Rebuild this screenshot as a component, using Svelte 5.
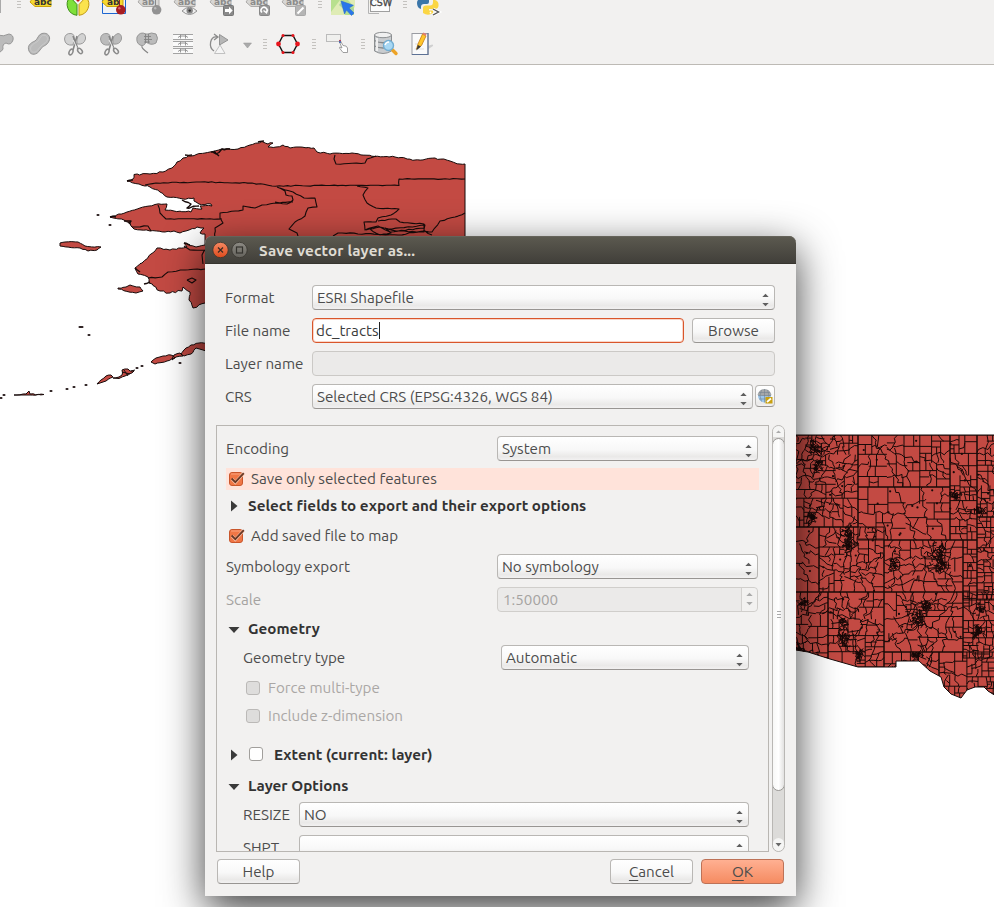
<script>
  let seed = 4326;
  function rnd() {
    seed = (seed * 1664525 + 1013904223) % 4294967296;
    return seed / 4294967296;
  }

  const fmt = (pts) => pts.map((p) => p[0].toFixed(1) + ' ' + p[1].toFixed(1)).join('L');

  // Midpoint displacement gives coastlines and borders their ragged look.
  function rough(pts, amp, minLen = 4) {
    const out = [pts[0]];
    for (let i = 1; i < pts.length; i++) {
      const a = pts[i - 1];
      const b = pts[i];
      const n = Math.max(1, Math.round(Math.hypot(b[0] - a[0], b[1] - a[1]) / minLen));
      for (let k = 1; k < n; k++) {
        const t = k / n;
        out.push([
          a[0] + (b[0] - a[0]) * t + (rnd() - 0.5) * amp,
          a[1] + (b[1] - a[1]) * t + (rnd() - 0.5) * amp
        ]);
      }
      out.push(b);
    }
    return out;
  }

  const mainland = 'M' + fmt([
    ...rough([[127,181],[133,179],[134,174.5],[150,174],[163,172],[172,168],[177,162],[183,158],[191,156],[205,153],[215,151],[225,149],[238,149],[250,145],[262,141.5],[268,144],[273,143],[268,147],[276,147],[283,145],[290,148],[300,147],[314,148],[317,152],[330,154],[352,153],[375,156.5],[395,157],[415,160],[435,158],[450,161],[460,164],[465,164]], 1.6, 3),
    [465,250],[205,250],
    ...rough([[205,234],[200,233],[204,228],[197,227],[189,230],[180,233],[174,231],[165,232],[150,231],[134,229],[131,226],[130,223],[124,220],[110,217],[127,212],[140,208],[155,204.5],[167,204],[165,210],[174,211],[191,212],[193,208],[202,209],[200,206],[212,206],[211,204],[199,204],[194,201],[194,198],[183,199],[167,197],[160,192],[150,187],[139,184],[127,181]], 1.4, 3)
  ]) + 'Z';

  const southwest = 'M' + fmt(
    rough([[220,245],[205,245],[196,247],[184,243],[187,247],[170,250],[157,248],[151,254],[142,263],[135,268],[138,274],[148,277],[149,283],[160,291],[170,293],[182,291],[183,287],[190,292],[189,300],[193,308],[205,303],[220,304]], 2, 3)
  ) + 'Z';

  const alaskaBorders = [
    [[145,185],[156,183],[200,182],[252,183],[272,186],[330,185.5],[399,185.5],[399,179],[465,179]],
    [[335,155],[334,159],[336,164],[365,163],[367,159],[376,156]],
    [[277,187],[285,191],[286,195],[292,196],[293,200],[287,204],[275,202]],
    [[280,188],[293,192],[304,198],[315,198],[317,207],[308,208],[305,216],[295,222],[289,229],[297,233],[298,236]],
    [[293,202],[275,203],[262,205],[255,208],[243,206],[243,210],[220,213],[220,218],[223,223],[215,228],[215,238]],
    [[158,205],[160,213],[166,219],[222,219]],
    [[132,227],[148,226],[151,231]],
    [[357,186],[368,188],[363,195],[367,203],[376,208],[399,209],[391,215],[378,218],[376,222],[364,222],[365,230],[378,226],[390,232],[424,228],[424,224],[400,222],[396,219],[378,221]],
    [[366,230],[380,227],[392,229],[425,225],[424,232],[396,231],[385,228],[391,233],[380,235],[370,229]],
    [[424,231],[432,232],[440,221],[455,217],[465,213]],
    [[333,236],[338,233],[398,235],[425,231],[432,235]],
    [[184,246],[190,250],[205,250]],
    [[148,278],[162,277],[168,272],[185,270],[205,269]],
    [[187,280],[192,278],[196,280],[192,283],[187,280]],
    [[206,249],[202,255],[203,264]]
  ].map((p) => 'M' + fmt(rough(p, 1, 4))).join('');

  const tips = [
    [[185,155],[192,155]], [[211,152],[216,154],[222,149],[230,149]], [[214,151],[219,156]],
    [[182,200],[191,204],[187,208],[199,206]], [[124,221],[131,221],[129,224]], [[127,181],[133,180]],
    [[184,243],[190,245]], [[110,217],[116,217]], [[258,142],[264,141]], [[135,268],[140,272]], [[144,284],[150,282]]
  ].map((p) => 'M' + fmt(rough(p, 2, 3))).join('');

  const islands = [
    [[60,243],[65,242],[78,242],[85,246],[101,247],[97,250],[88,251],[80,248],[60,246]],
    [[118,288],[126,287],[130,285],[140,287],[143,291],[136,293],[118,289]],
    [[97,384],[101,380],[106,376],[111,375],[113,377],[106,381]],
    [[113,378],[119,377],[122,375],[122,370],[128,369],[130,371],[134,371],[129,374],[125,376],[119,378.5]],
    [[151,362],[156,358],[163,356],[171,355],[175,358],[167,361],[155,364]],
    [[172,360],[174,355],[180,353],[183,356],[176,357]],
    [[181,354],[184,350],[191,345],[199,343],[210,343],[210,352],[203,350],[196,348],[191,354],[184,356]],
    [[14,395],[26,394],[29,391],[30,394],[44,394.5],[30,395]]
  ].map((p) => 'M' + fmt(rough(p, 1.2, 3)) + 'Z').join('');

  const specks = [[98,215],[110,225],[80,327],[89,335],[1,398],[4,395],[51,391],[67,389],[74,387],[86,385],[137,368],[142,366],[180,363],[82,327]];

  // Census tracts: cells are split recursively, finer near towns.
  const towns = [[817,449,6],[818,465,4],[847,532,6],[848,545,6],[938,553,8],[940,566,6],[845,638,8],[917,618,6],[926,606,5],[978,632,7],[860,655,5],[917,656,5],[804,603,4],[798,648,4],[893,565,4],[955,496,4],[979,510,4],[812,519,4],[843,622,4],[980,610,3]];

  let tracts = '';
  function line(a, b, wob) {
    tracts += 'M' + fmt(wob < 0.6 ? [a, b] : rough([a, b], wob, 3.6));
  }
  function cellSize(x, y) {
    let s = 10;
    if (x < 819 && y > 527 && y < 592) s = 20;
    else if (x < 858 && y < 527) s = 8.5;
    else if (x > 858 && x < 950 && y > 487 && y < 540) s = 14;
    else if (x > 950 && y < 487) s = 9.5;
    else if (x > 963) s = 7;
    for (const t of towns) {
      const d = Math.hypot(x - t[0], y - t[1]);
      if (d < t[2] * 2) s = Math.min(s, 3 + d / 3);
    }
    return s;
  }
  function split(x, y, w, h) {
    const cx = x + w / 2;
    const cy = y + h / 2;
    const s = cellSize(cx, cy) * (0.7 + rnd() * 0.7);
    const big = Math.max(w, h);
    if (big < s * 1.25 || Math.min(w, h) < 1.8) return;
    const east = cx > 950 || (cx > 858 && cy < 540);
    const wob = rnd() < (east ? 0.4 : 0.75) ? Math.min(4.5, big * 0.28) : 0;
    const f = 0.3 + rnd() * 0.4;
    if (w * (0.75 + rnd() * 0.5) > h) {
      const m = x + w * f;
      const k = wob ? (rnd() - 0.5) * w * 0.4 : 0;
      line([m - k, y], [m + k, y + h], wob);
      split(x, y, w * f, h);
      split(m, y, w * (1 - f), h);
    } else {
      const m = y + h * f;
      const k = wob ? (rnd() - 0.5) * h * 0.4 : 0;
      line([x, m - k], [x + w, m + k], wob);
      split(x, y, w, h * f);
      split(x, m, w, h * (1 - f));
    }
  }
  const counties = [
    [790,435,68,92],[858,435,92,52],[950,435,27,105],[977,435,20,82],[858,487,92,53],
    [790,527,29,65],[819,527,65,65],[884,540,79,52],[963,540,14,60],[977,517,20,83],
    [790,592,38,75],[828,592,56,75],[884,592,79,60],[884,652,55,26],[963,592,34,66],[939,652,58,50]
  ];
  for (const [x, y, w, h] of counties) {
    tracts += `M${x} ${y}h${w}v${h}h${-w}z`;
    split(x, y, w, h);
  }

  let sprawl = '';
  for (const [tx, ty, r] of towns) {
    for (let i = 0; i < r * 2.8; i++) {
      let x = tx + (rnd() + rnd() - 1) * r * 0.9;
      let y = ty + (rnd() + rnd() - 1) * r * 1.1;
      const p = [[x, y]];
      for (let j = 0; j < 5; j++) {
        x += (rnd() - 0.5) * 4.4;
        y += (rnd() - 0.5) * 4.4;
        p.push([x, y]);
      }
      sprawl += 'M' + fmt(p);
    }
  }
  const hamlets = Array.from({ length: 60 }, () => [798 + rnd() * 194, 438 + rnd() * 220]);

  const conus = 'M790 435H996V696L988 691L984 687L975 687L967 690L961 698L951 694L944 687L941 677L930 671L919 661H896V667H858L830 659L808 652L790 649Z';

  let fileName = $state('dc_tracts');
</script>

{#snippet arrows()}
  <svg class="arrows" width="7" height="14" viewBox="0 0 7 14"><path d="M.3 4L3.5.7L6.7 4zM.3 10L3.5 13.3L6.7 10z" /></svg>
{/snippet}

{#snippet grip(cls)}
  <svg class={cls} viewBox="0 0 6 12" width="6" height="12"><path d="M1 1.5h4M1 4.5h4M1 7.5h4M1 10.5h4" stroke="#c4c2bf" /></svg>
{/snippet}

{#snippet tag(x, bright)}
  <path d="M{x - 11} 2L{x - 6} -5H{x + 10}V6.5H{x - 6}Z" fill={bright ? '#f5d92f' : '#d8d7d5'} stroke={bright ? '#c9a20c' : '#adaba9'} />
{/snippet}

{#snippet check()}
  <svg class="tick" width="17" height="17" viewBox="0 0 17 17">
    <rect x="1.5" y="1.5" width="13" height="13" rx="2.5" fill="#f07746" stroke="#c9562b" />
    <path d="M3 3h10" stroke="#f9a37e" />
    <path d="M4 8L7.3 11.5L15.5 2.5" fill="none" stroke="#fbc1a8" stroke-width="3.2" />
    <path d="M3.6 7.5L7.3 11.2L15.8 2.1" fill="none" stroke="#693824" stroke-width="1.8" />
  </svg>
{/snippet}

<main>
  <header class="toolbars">
    <div class="bar top">
      <svg width="60" height="20" viewBox="0 0 60 20">
        <path d="M.5 0V13" stroke="#aaa" /><path d="M17 1.5h4M17 4.5h4M17 7.5h4M17-1.5h4" stroke="#c4c2bf" />
        {@render tag(41, true)}<text x="34" y="4.5" fill="#333">abc</text>
      </svg>
      <svg width="36" height="20" viewBox="60 0 36 20">
        <path d="M77 4.5L70-3A11 11 0 0 0 77 15.3Z" fill="#7fe03a" stroke="#3d8f16" /><path d="M79 4.5L86-3A11 11 0 0 1 79 15.3Z" fill="#fbe34d" stroke="#c19a12" />
        <path d="M75 -1L78 2L81 -1Z" fill="#c4141b" />
      </svg>
      <svg width="36" height="20" viewBox="96 0 36 20">
        <path d="M102.5-5V13.5H125.5V-5" fill="#f0f2f5" stroke="#1d66d1" />
        {@render tag(113, true)}<text x="107" y="4.5" fill="#333">ab</text>
        <path d="M119.5-2V6" stroke="#8b2326" /><circle cx="120.8" cy="9.8" r="4.8" fill="#a81d21" /><circle cx="119.3" cy="8.2" r="1.2" fill="#da6468" />
      </svg>
      <svg width="36" height="20" viewBox="132 0 36 20">
        {@render tag(149, false)}<text x="142" y="4.5" fill="#8b8b8b">ab</text>
        <path d="M155.5-2V6" stroke="#8a8a8a" /><circle cx="156.6" cy="9.8" r="4.8" fill="#929292" /><circle cx="155.2" cy="8.2" r="1.2" fill="#bbb" />
      </svg>
      <svg width="36" height="20" viewBox="168 0 36 20">
        {@render tag(185, false)}<text x="178" y="4.5" fill="#8b8b8b">abc</text>
        <path d="M182 11Q189.5 3.5 197 11Q189.5 18 182 11Z" fill="#eee" stroke="#929292" /><circle cx="189.7" cy="10.6" r="3.2" fill="#888" /><circle cx="189.7" cy="10.6" r="1.2" fill="#333" />
      </svg>
      <svg width="36" height="20" viewBox="204 0 36 20">
        {@render tag(221, false)}<text x="214" y="4.5" fill="#8b8b8b">abc</text>
        <rect x="223.5" y="5.5" width="10" height="10" rx="1" fill="#8a8a8a" stroke="#777" /><path d="M225 9H229V6.8L232.7 10.5L229 14.2V12H225Z" fill="#fff" />
      </svg>
      <svg width="36" height="20" viewBox="240 0 36 20">
        {@render tag(257, false)}<text x="250" y="4.5" fill="#8b8b8b">abc</text>
        <rect x="259.5" y="5.5" width="10" height="10" rx="1" fill="#999" stroke="#888" /><path d="M262 12.5A3 3 0 1 1 266.5 12M263.5 10.5L266.5 12.8L267.8 9.5" fill="none" stroke="#fff" stroke-width="1.5" />
      </svg>
      <svg width="36" height="20" viewBox="276 0 36 20">
        {@render tag(293, false)}<text x="286" y="4.5" fill="#8b8b8b">abc</text>
        <rect x="295.5" y="5.5" width="10" height="10" rx="1" fill="#b5b5b5" stroke="#a8a8a8" /><path d="M297.5 13.5L303.5 7.5" stroke="#fff" stroke-width="2" />
      </svg>
      <svg width="48" height="20" viewBox="312 0 48 20">
        <path d="M318 1.5h4M318 4.5h4M318 7.5h4M318-1.5h4" stroke="#c4c2bf" />
        <path d="M331-2H354V15H331Z" fill="#b8e08e" /><path d="M331 12L340 0L345 15H331ZM348 0L355 8V0Z" fill="#dfecb5" /><path d="M343 0L347 5L354 9V15H350L339 5Z" fill="#a9d4a0" />
        <path d="M341 1L353.5 5.3L349 8L354 13L351.5 15.5L346.5 10L344.5 14Z" fill="#2a76ea" stroke="#2466cc" stroke-width=".5" />
      </svg>
      <svg width="50" height="20" viewBox="360 0 50 20">
        <path d="M368.5 0V13.5H379" fill="none" stroke="#b4b4b4" /><rect x="370.5" y="-4" width="19" height="15.5" fill="#fcfcfc" stroke="#9f9f9f" />
        <text x="370" y="6" fill="#444" class="csw">CSW</text>
        <path d="M403 1.5h4M403 4.5h4M403 7.5h4M403-1.5h4" stroke="#c4c2bf" />
      </svg>
      <svg width="36" height="20" viewBox="410 0 36 20">
        <path d="M429-5V2Q429 4 427 4H424Q421 4 421 7V9Q417 8 417 3Q417-1 421-1H429" fill="#3b76a9" />
        <path d="M433 0H435Q439 1 438.5 6Q438 9 435 9H429V10.5H433V13Q428 16.5 423 13V8Q423 5.5 426 5.5H430Q433 5.5 433 2Z" fill="#fbd644" /><circle cx="430.5" cy="12.5" r=".9" fill="#fff" />
        <path d="M433 9L439 12L433 15" fill="none" stroke="#fff" stroke-width="3" /><path d="M433 9L438.5 12L433 15" fill="none" stroke="#555" stroke-width="1.4" />
      </svg>
    </div>
    <div class="bar">
      <svg width="21" height="32" viewBox="0 28 21 32"><path d="M-3 35Q4 37 9 34Q14 35 13 40Q11 46 6 43Q2 44 3 49Q0 54-3 51Z" fill="#bbb" stroke="#979797" /></svg>
      <svg width="36" height="32" viewBox="21 28 36 32"><path d="M42 33.5C48 32 51 37 49 41C47 46 43 45 40 50C37 55 31 56 29 51C27 46 30 43 35 41C38 39 38 34.5 42 33.5Z" fill="#bbb" stroke="#959595" /><path d="M42.5 35.5C46.5 34.5 48.5 37.5 47 40.5C45 44 42 44 38.5 49C36 53 32.5 53 31 50.5C29.5 47 32 44.5 36 42.5C40 40.5 39.5 36.5 42.5 35.5Z" fill="none" stroke="#cfcfcf" stroke-width=".7" /></svg>
      {#each [75, 111] as x}
        <svg width="36" height="32" viewBox="{x - 18} 28 36 32">
          <path d="M{x - 2} 45Q{x - 10} 46 {x - 10.5} 39Q{x - 10} 33 {x - 4} 33.5Q{x} 34 {x - 1} 40Z" fill={x === 75 ? '#d2d2d2' : '#bbb'} stroke="#9b9b9b" /><path d="M{x + 2} 44Q{x + 1} 35 {x + 7} 33.5Q{x + 11} 34 {x + 10.5} 39Q{x + 9} 45 {x + 2} 44Z" fill={x === 75 ? '#d2d2d2' : '#bbb'} stroke="#9b9b9b" />
          <path d="M{x - 2} 36L{x + 3} 49M{x + 2} 36L{x - 2} 50" stroke="#858585" stroke-width="1.6" /><path d="M{x - 2} 40L{x + 2} 48" stroke="#ededed" />
          <ellipse cx={x - 4} cy="52" rx="1.8" ry="3" transform="rotate(25 {x - 4} 52)" fill="none" stroke="#8b8b8b" stroke-width="1.5" /><ellipse cx={x + 5} cy="51" rx="1.8" ry="3" transform="rotate(-40 {x + 5} 51)" fill="none" stroke="#8b8b8b" stroke-width="1.5" />
        </svg>
      {/each}
      <svg width="36" height="32" viewBox="129 28 36 32"><path d="M146 34Q140 31 137 37Q136 43 140 45Q144 47 146 42Q151 46 156 43Q159 38 156 34Q151 32 148 34Z" fill="#bbb" stroke="#979797" /><path d="M144 36.5H151M144 39.5H152M144 42H150M145.5 34V43M148.5 34V43" stroke="#828282" stroke-width=".9" /><path d="M142 46Q141 48 148 53" fill="none" stroke="#858585" stroke-width="1.2" /></svg>
      <svg width="36" height="32" viewBox="165 28 36 32">
        {#each [34.5, 41.5, 48.5] as y}<rect x="173" {y} width="20" height="4.5" fill="#fafafa" /><path d="M173 {y}H193M173 {y + 5}H193" stroke="#a3a3a3" /><path d="M178 {y + 3}Q180 {y + 1} 182 {y + 1.5}H184Q186 {y + 1} 188 {y + 3}M180.5 {y}V{y + 4}M185.5 {y}V{y + 4}" fill="none" stroke="#8c8c8c" stroke-width=".9" />{/each}
      </svg>
      <svg width="36" height="32" viewBox="201 28 36 32"><path d="M219.5 34.5V45L228 40Z" fill="#b7b7b7" stroke="#949494" /><path d="M220 45L225 53.5H214.5Z" fill="#f5f5f5" stroke="#c1c1c1" /><path d="M214 51C208 47 210 36 217 37M214 34L218 37L214 40" fill="none" stroke="#8b8b8b" stroke-width="1.3" /></svg>
      <svg width="21" height="32" viewBox="237 28 21 32"><path d="M243.5 43H251.5L247.5 48Z" fill="#aaa" stroke="#969696" stroke-width=".5" /></svg>
      {@render grip('gap-a')}
      <svg width="36" height="32" viewBox="270 28 36 32"><path d="M278.5 44L283 35.5H293L297.5 44L293 52.5H283Z" fill="none" stroke="#111" stroke-width="1.4" /><g fill="#e8141c"><circle cx="278.5" cy="44" r="2.4" /><circle cx="297.5" cy="44" r="2.4" /><circle cx="283" cy="35.5" r="1.5" /><circle cx="293" cy="35.5" r="1.5" /><circle cx="283" cy="52.5" r="1.5" /><circle cx="293" cy="52.5" r="1.5" /></g></svg>
      {@render grip('gap-b')}
      <svg width="32" height="32" viewBox="322 28 32 32"><rect x="326.5" y="34.5" width="14" height="7" fill="#f0f0ee" stroke="#bbb" /><path d="M339.5 42L342 48Q339 46 339.5 48L343 52.5H347.5V48Q347 45.5 343 45.5L340.5 41Z" fill="#fff" stroke="#888" stroke-width=".8" /><path d="M340 40V43" stroke="#3d65b5" stroke-width="1.6" /><circle cx="340" cy="40.5" r=".8" fill="#d33" /></svg>
      {@render grip('gap-c')}
      <svg width="35" height="32" viewBox="369 28 35 32">
        <path d="M374.5 35V51Q383 56 391.5 51V35Z" fill="#c9cccf" stroke="#8c8f91" /><ellipse cx="383" cy="35" rx="8.5" ry="2.7" fill="#f0f0f0" stroke="#8c8f91" /><path d="M374.5 40.5Q383 45 391.5 40.5M374.5 46Q383 50 391.5 46" fill="none" stroke="#85888a" stroke-width="1.3" /><path d="M377 38V51" stroke="#eee" stroke-width="2" />
        <path d="M392.5 50L396 53.5" stroke="#eda326" stroke-width="3.4" stroke-linecap="round" /><circle cx="388.5" cy="45.5" r="5" fill="#a8d8f4" stroke="#74aed2" stroke-width="1.4" /><path d="M385 45Q386 42 389 42" fill="none" stroke="#fff" stroke-width="1.5" />
      </svg>
      <svg width="36" height="32" viewBox="404 28 36 32"><path d="M421 54L433 46Q434 43 428 46Z" fill="#d0d0d0" /><rect x="412" y="33.5" width="16" height="21" fill="#fafafa" stroke="#9a9ca2" /><path d="M412 54.5H428V33" fill="none" stroke="#5d7195" stroke-width="1.1" /><path d="M415 44H423M414.5 49H424" stroke="#ddd" /><path d="M416.5 49L418 44L422.5 34L426 36L421.5 45.5Z" fill="#ffc52b" stroke="#c77e12" stroke-width=".8" /><path d="M416.3 50.5L417.8 45L421 46.5Z" fill="#393939" /><path d="M422.5 34L423.3 32.5L426.5 34L426 36Z" fill="#e27d71" /></svg>
    </div>
  </header>

  <svg class="map" width="994" height="842" viewBox="0 65 994 842">
    <defs><clipPath id="landmass"><path d={conus} /></clipPath></defs>
    <g fill="#c34a43" stroke="#170b0a" stroke-width="1" stroke-linejoin="round">
      <path d={mainland} /><path d={southwest} /><path d={islands} />
      <path d={alaskaBorders} fill="none" stroke-width="1.1" />
      <path d={tips} fill="none" stroke-width="1.4" />
      <path d="M122 372L130 374M124 370L128 376M131 371L135 370" fill="none" />
      <path d={conus} />
    </g>
    {#each specks as [x, y]}<ellipse cx={x} cy={y} rx="1.6" ry="1" fill="#221415" />{/each}
    <g clip-path="url(#landmass)" fill="none" stroke="#180a09">
      <path d={tracts} stroke-width="1" />
      <path d={sprawl} stroke-width="1" />
      {#each hamlets as [x, y]}<circle cx={x} cy={y} r="1.1" fill="#180a09" stroke="none" />{/each}
    </g>
  </svg>

  <section class="dialog">
    <div class="titlebar">
      <svg width="36" height="18" viewBox="0 0 36 18">
        <defs><linearGradient id="close" x2="0" y2="1"><stop stop-color="#f58a63" /><stop offset="1" stop-color="#df4a1c" /></linearGradient><linearGradient id="max" x2="0" y2="1"><stop stop-color="#8d8b84" /><stop offset="1" stop-color="#64625c" /></linearGradient></defs>
        <circle cx="8.5" cy="9" r="7.7" fill="url(#close)" stroke="#37352f" stroke-width=".8" /><path d="M6 6.5L11 11.5M11 6.5L6 11.5" stroke="#3b2a22" stroke-width="1.2" />
        <circle cx="27.5" cy="9" r="7.7" fill="url(#max)" stroke="#37352f" stroke-width=".8" /><rect x="24.5" y="6" width="6" height="6" fill="none" stroke="#34332e" stroke-width="1.2" />
      </svg>
      <h1>Save vector layer as...</h1>
    </div>

    <div class="form">
      <div class="row"><label for="fmt">Format</label><div class="combo" id="fmt"><span>ESRI Shapefile</span>{@render arrows()}</div></div>
      <div class="row"><label for="file">File name</label><div class="input focus" id="file"><span>{fileName}</span><i></i></div><button class="browse">Browse</button></div>
      <div class="row"><label for="layer">Layer name</label><div class="input off" id="layer"></div></div>
      <div class="row"><label for="crs">CRS</label><div class="combo" id="crs"><span>Selected CRS (EPSG:4326, WGS 84)</span>{@render arrows()}</div>
        <button class="globe" aria-label="Select CRS">
          <svg width="16" height="16" viewBox="0 0 16 16"><circle cx="7.5" cy="8" r="6.5" fill="#9cc6ec" /><path d="M.5 7Q2 1 7.5 1T14.5 7Q13 9 7.5 8T.5 7Z" fill="#a5a7a9" /><path d="M1 7.5H14M2 4.5H13M2 11H11M7.5 1V14.5M4.5 2Q1.5 8 4.5 13.5M10.5 2Q13.5 8 10.5 13" fill="none" stroke="#76838e" stroke-width=".6" /><rect x="8.5" y="9" width="7" height="6.5" fill="#c9a00f" /><path d="M10 14L14 10.5" stroke="#fff" stroke-width="1.7" /></svg>
        </button>
      </div>
    </div>

    <div class="options">
      <div class="pane">
        <div class="line"><span class="name">Encoding</span><div class="combo right"><span>System</span>{@render arrows()}</div></div>
        <div class="checkline hot">{@render check()}<span>Save only selected features</span></div>
        <div class="group"><svg width="22" height="12" viewBox="0 0 22 12"><path d="M5 .5L11.5 6L5 11.5Z" /></svg><b>Select fields to export and their export options</b></div>
        <div class="checkline">{@render check()}<span>Add saved file to map</span></div>
        <div class="line sym"><span class="name">Symbology export</span><div class="combo right"><span>No symbology</span>{@render arrows()}</div></div>
        <div class="line scale"><span class="name">Scale</span><div class="spin right"><span>1:50000</span><div>{@render arrows()}</div></div></div>
        <div class="group geo"><svg width="22" height="12" viewBox="0 0 22 12"><path d="M2.5 4H13.5L8 10Z" /></svg><b>Geometry</b></div>
        <div class="line inner"><span class="name">Geometry type</span><div class="combo type"><span>Automatic</span>{@render arrows()}</div></div>
        <div class="boxline"><i class="box"></i><span>Force multi-type</span></div>
        <div class="boxline"><i class="box"></i><span>Include z-dimension</span></div>
        <div class="group extent"><svg width="22" height="12" viewBox="0 0 22 12"><path d="M5 .5L11.5 6L5 11.5Z" /></svg><i class="box on"></i><b>Extent (current: layer)</b></div>
        <div class="group lay"><svg width="22" height="12" viewBox="0 0 22 12"><path d="M2.5 4H13.5L8 10Z" /></svg><b>Layer Options</b></div>
        <div class="line inner"><span class="name opt">RESIZE</span><div class="combo"><span>NO</span>{@render arrows()}</div></div>
        <div class="line inner shpt"><span class="name opt">SHPT</span><div class="combo"><span></span>{@render arrows()}</div></div>
      </div>
      <div class="scroll">
        <svg class="up" width="11" height="11" viewBox="0 0 11 11"><path d="M3 7L5.5 4.5L8 7Z" fill="#aaa" /></svg>
        <div class="thumb"><i></i><i></i><i></i></div>
        <svg class="down" width="11" height="13" viewBox="0 0 11 13"><path d="M2.5 5L5.5 8.5L8.5 5Z" fill="#696969" /></svg>
      </div>
    </div>

    <footer><button>Help</button><span></span><button><u>C</u>ancel</button><button class="ok"><u>O</u>K</button></footer>
  </section>
</main>

<style>
  :global(body) { margin: 0; overflow: hidden; background: #fff; }
  main { position: relative; width: 994px; height: 907px; overflow: hidden; font: 15.2px Ubuntu, 'Noto Sans', sans-serif; color: #4c4c4c; }
  svg { display: block; flex: none; }
  .toolbars { box-sizing: border-box; height: 65px; background: #f2f1f0; border-bottom: 1px solid #bdbab5; }
  .bar { display: flex; align-items: center; height: 32px; }
  .bar.top { height: 28px; align-items: flex-start; }
  .bar text { font: bold 9px 'DejaVu Sans', sans-serif; }
  .bar .csw { font-size: 9.5px; font-weight: normal; letter-spacing: .1px; stroke: #444; stroke-width: .3px; }
  .gap-a { margin: 0 2px 0 4px; }
  .gap-b { margin: 0 5px; }
  .gap-c { margin: 0 3px 0 6px; }
  .map { background: #fff; }

  .dialog { position: absolute; left: 205px; top: 236px; width: 591px; height: 660px; box-sizing: border-box; background: #f2f1f0; border-radius: 7px 7px 0 0; box-shadow: 0 13px 42px rgba(0, 0, 0, .76); }
  .titlebar { display: flex; align-items: center; height: 28px; padding-left: 7px; border-radius: 7px 7px 0 0; background: linear-gradient(#5c5a50, #403e39); box-shadow: inset 0 1px #65635a, inset 0 -1px #37352f; }
  h1 { margin: 1px 0 0 11px; font-size: 15.2px; font-weight: bold; color: #dfdbd2; letter-spacing: .15px; }

  .form { display: flex; flex-direction: column; gap: 8px; padding: 21px 21px 0 20px; }
  .row { display: flex; align-items: center; height: 25px; }
  .row label { width: 87px; flex: none; white-space: nowrap; }
  .combo, .input, .spin, button { box-sizing: border-box; height: 25px; border: 1px solid #b9b7b4; border-bottom-color: #989592; border-radius: 4px; background: linear-gradient(#fff, #f8f8f8 55%, #eae9e8 85%, #f2f1f1); }
  .combo { display: flex; align-items: center; justify-content: space-between; flex: 1; padding: 0 5px 0 4px; white-space: nowrap; }
  .arrows { fill: #5e5e5e; margin-top: 4px; }
  .input { flex: 1; display: flex; align-items: center; padding-left: 3px; background: #fff; }
  .focus { border: 1px solid #d9562b; color: #3c3c3c; box-shadow: inset 0 0 0 1px #f9d6c9; }
  .focus i { width: 1px; height: 17px; background: #222; }
  .off { background: #ebeae9; border-color: #cbc9c6; }
  button { width: 83px; padding: 0; font: inherit; color: inherit; text-align: center; }
  .browse { margin-left: 8px; }
  .globe { width: 20px; height: 22px; margin: -2px 0 0 2px; display: flex; align-items: center; justify-content: center; }

  .options { display: flex; gap: 3px; margin: 16px 11px 0; height: 427px; }
  .pane { box-sizing: border-box; width: 553px; padding: 10px 9px 0; overflow: hidden; border: 1px solid #b9b6b2; }
  .line { display: flex; align-items: center; height: 25px; white-space: nowrap; }
  .name { flex: 1; }
  .right { flex: none; width: 261px; margin-right: 1px; }
  .checkline { display: flex; align-items: center; gap: 6px; height: 30px; padding-left: 2px; }
  .checkline span, .boxline span, .group b { line-height: 18px; }
  .hot { height: 22px; margin: 7px 0 1px; background: #ffe3da; }
  .group { display: flex; align-items: center; height: 30px; color: #333; white-space: nowrap; }
  .group svg { fill: #3a3a3a; }
  .group b { letter-spacing: .03px; }
  .sym { margin-top: 3px; }
  .scale { margin-top: 8px; color: #a5a3a1; }
  .spin { display: flex; justify-content: space-between; align-items: stretch; background: #ebeae9; border-color: #d0cecb; }
  .spin span { padding-left: 5px; line-height: 24px; }
  .spin div { width: 15px; border-left: 1px solid #d3d1cf; background: #f2f1f0; border-radius: 0 4px 4px 0; display: flex; justify-content: center; }
  .spin .arrows { fill: #aaa; }
  .geo { margin: 2px 0 1px; }
  .inner { padding: 0 10px 0 17px; }
  .type { flex: none; width: 248px; }
  .boxline { display: flex; align-items: center; gap: 8px; height: 28px; padding-left: 20px; color: #aaa7a5; }
  .box { box-sizing: border-box; width: 14px; height: 14px; border: 1px solid #bbb9b7; border-radius: 3px; background: #dedddc; }
  .box.on { margin: -2px 11px 0 1px; background: #fff; border-color: #a19f9c; }
  .inner + .boxline { margin-top: 4px; }
  .extent { margin-top: 10px; }
  .lay { margin: 1px 0; }
  .opt { flex: none; width: 56px; }
  .shpt { margin-top: 8px; }

  .scroll { box-sizing: border-box; width: 13px; border: 1px solid #b9b7b4; border-radius: 7px; background: #dcdbd9; display: flex; flex-direction: column; overflow: hidden; }
  .up { background: #f5f5f4; }
  .thumb { box-sizing: border-box; height: 353px; margin: 1px -1px 0; border: 1px solid #999794; border-radius: 7px; background: linear-gradient(90deg, #f7f7f6, #fff 50%, #e2e1e0); display: flex; flex-direction: column; align-items: center; justify-content: center; gap: 2px; }
  .thumb i { width: 4px; height: 1px; background: #aaa; }
  .down { margin-top: auto; background: #f5f5f4; border-radius: 6px; }

  footer { display: flex; gap: 8px; padding: 7px 12px 0; }
  footer span { flex: 1; }
  .ok { border-color: #bd7257; background: linear-gradient(#ffb092, #f58b61); }
  u { text-underline-offset: 2.5px; text-decoration-thickness: 1px; }
</style>
